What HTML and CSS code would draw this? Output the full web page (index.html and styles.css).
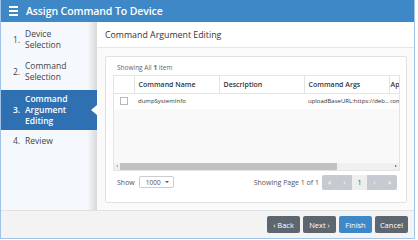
FILE: index.html
```html
<!DOCTYPE html>
<html lang="en">

<head>
  <meta charset="UTF-8">
  <title>Assign Command To Device</title>
  <link rel="stylesheet" href="styles.css">
</head>

<body>

  <div class="window">
    <div class="titlebar">
      <span class="menu-icon"><i></i><i></i><i></i></span>
      <span class="title">Assign Command To Device</span>
    </div>

    <div class="main">
      <!-- wizard steps -->
      <ul class="steps">
        <li><span class="num">1.</span><span class="label">Device<br>Selection</span></li>
        <li><span class="num">2.</span><span class="label">Command<br>Selection</span></li>
        <li class="active"><span class="num">3.</span><span class="label">Command<br>Argument<br>Editing</span></li>
        <li><span class="num">4.</span><span class="label">Review</span></li>
      </ul>

      <div class="content">
        <div class="content-header">Command Argument Editing</div>
        <div class="content-body">
          <div class="panel">
            <div class="count">Showing All <b>1</b> item</div>
            <div class="grid">
              <div class="grid-scroll">
                <table>
                  <colgroup>
                    <col class="col-check">
                    <col class="col-data">
                    <col class="col-data">
                    <col class="col-data">
                    <col>
                  </colgroup>
                  <thead>
                    <tr>
                      <th></th>
                      <th>Command Name</th>
                      <th>Description</th>
                      <th>Command Args</th>
                      <th class="cut">Ap</th>
                    </tr>
                  </thead>
                  <tbody>
                    <tr>
                      <td><span class="checkbox"></span></td>
                      <td>dumpSystemInfo</td>
                      <td></td>
                      <td>uploadBaseURL:https://deb...</td>
                      <td class="cut">com</td>
                    </tr>
                  </tbody>
                </table>
              </div>
              <div class="hscroll">
                <span class="arrow left"></span>
                <span class="thumb"></span>
                <span class="arrow right"></span>
              </div>
            </div>
            <div class="pager">
              <div class="page-size">Show <span class="select">1000 <i class="caret"></i></span></div>
              <div class="page-info">Showing Page 1 of 1</div>
              <div class="page-buttons">
                <span class="pbtn">&laquo;</span>
                <span class="pbtn">&lsaquo;</span>
                <span class="pbtn current">1</span>
                <span class="pbtn">&rsaquo;</span>
                <span class="pbtn">&raquo;</span>
              </div>
            </div>
          </div>
        </div>
      </div>
    </div>

    <div class="footer">
      <button class="btn">&lsaquo; Back</button>
      <button class="btn">Next &rsaquo;</button>
      <button class="btn primary">Finish</button>
      <button class="btn">Cancel</button>
    </div>
  </div>

</body>

</html>
```

FILE: styles.css
```css
* {
  margin: 0;
  padding: 0;
  box-sizing: border-box;
}

body {
  font-family: "Open Sans", "DejaVu Sans", sans-serif;
  background-color: #fff;
  color: #333;
}

.window {
  width: 415px;
  height: 239px;
  border: 1px solid #9fc4e8;
  border-top: none;
  display: flex;
  flex-direction: column;
  background-color: #fff;
  overflow: hidden;
}

.titlebar {
  height: 22px;
  flex-shrink: 0;
  background-color: #3f88c8;
  color: white;
  display: flex;
  align-items: center;
  padding-left: 8px;
}

.menu-icon {
  display: flex;
  flex-direction: column;
  gap: 2px;
  width: 9px;
  margin-right: 8px;
}

.menu-icon i {
  display: block;
  height: 2px;
  background-color: white;
}

.title {
  font-size: 10.5px;
  font-weight: 600;
  letter-spacing: -0.1px;
}

.main {
  flex: 1;
  display: flex;
  min-height: 0;
}

/* wizard steps */
.steps {
  list-style: none;
  width: 96px;
  flex-shrink: 0;
  background: linear-gradient(to right, #f5f8fc 0%, #f5f8fc 90%, #d8d8d8 100%);
  font-size: 8.5px;
  color: #444;
  padding-top: 3px;
}

.steps li {
  display: flex;
  align-items: center;
  padding: 3px 0 3px 12px;
  line-height: 11px;
  position: relative;
}

.steps li + li {
  margin-top: 4px;
}

.steps .num {
  width: 12px;
  flex-shrink: 0;
}

.steps li.active {
  background-color: #2f70b2;
  color: white;
  font-weight: 600;
  padding-top: 3px;
  padding-bottom: 4px;
  margin-top: 5px;
}

.steps li.active + li {
  margin-top: 2px;
}

.steps li.active::after {
  content: "";
  position: absolute;
  right: 0;
  top: 50%;
  margin-top: -5px;
  border-top: 5px solid transparent;
  border-bottom: 5px solid transparent;
  border-right: 6px solid white;
}

.content {
  flex: 1;
  min-width: 0;
  display: flex;
  flex-direction: column;
  background-color: #fff;
}

.content-header {
  height: 26px;
  flex-shrink: 0;
  display: flex;
  align-items: center;
  padding-left: 8px;
  font-size: 8.8px;
  color: #333;
  border-bottom: 1px solid #e6e6e6;
}

.content-body {
  flex: 1;
  min-height: 0;
  background-color: #fafafa;
  padding: 8px 7px 7px 8px;
}

.panel {
  height: 100%;
  background-color: #fff;
  border: 1px solid #e2e2e2;
  border-radius: 2px;
  padding: 6px 6px 0 7px;
  display: flex;
  flex-direction: column;
}

.count {
  font-size: 6.5px;
  color: #666;
  padding-left: 4px;
  height: 12px;
}

.grid {
  border: 1px solid #e4e4e4;
  height: 96px;
  flex-shrink: 0;
  display: flex;
  flex-direction: column;
  background-color: #f9f9f9;
  overflow: hidden;
}

.grid-scroll {
  flex: 1;
  overflow: hidden;
}

table {
  border-collapse: collapse;
  width: 100%;
  table-layout: fixed;
  font-size: 6px;
  color: #333;
}

.col-check {
  width: 20px;
}

.col-data {
  width: 85px;
}

th {
  background-color: #fff;
  font-weight: 600;
  font-size: 7px;
  text-align: left;
  height: 17px;
  padding-left: 4px;
  border-right: 1px solid #e4e4e4;
  border-bottom: 1px solid #e4e4e4;
  white-space: nowrap;
  overflow: hidden;
}

td {
  background-color: #fff;
  height: 16px;
  padding-left: 4px;
  white-space: nowrap;
  overflow: hidden;
}

th.cut,
td.cut {
  padding-left: 1px;
  border-right: none;
}

td.cut {
  font-size: 5.6px;
  letter-spacing: -0.2px;
}

.checkbox {
  display: block;
  width: 8px;
  height: 8px;
  border: 1px solid #b8b8b8;
  background-color: #fff;
  margin-left: 2px;
}

.hscroll {
  height: 7px;
  flex-shrink: 0;
  display: flex;
  align-items: center;
  background-color: #f0f0f0;
}

.hscroll .arrow {
  width: 6px;
  height: 7px;
  position: relative;
}

.hscroll .arrow::after {
  content: "";
  position: absolute;
  top: 2px;
  left: 2px;
  border-top: 1.5px solid transparent;
  border-bottom: 1.5px solid transparent;
}

.hscroll .left::after {
  border-right: 2px solid #a0a0a0;
}

.hscroll .right::after {
  border-left: 2px solid #505050;
}

.hscroll .thumb {
  width: 217px;
  height: 7px;
  background-color: #c1c1c1;
  margin-right: auto;
}

.pager {
  display: flex;
  align-items: center;
  height: 22px;
  font-size: 7px;
  color: #555;
  padding-left: 4px;
}

.page-size {
  display: flex;
  align-items: center;
  gap: 4px;
}

.select {
  display: inline-flex;
  align-items: center;
  gap: 4px;
  height: 12px;
  padding: 0 4px 0 6px;
  border: 1px solid #ccc;
  border-radius: 2px;
  background-color: #fff;
  font-size: 6.5px;
}

.caret {
  border-left: 2px solid transparent;
  border-right: 2px solid transparent;
  border-top: 2.5px solid #555;
}

.page-info {
  margin-left: auto;
  margin-right: 3px;
}

.page-buttons {
  display: flex;
  height: 15px;
  margin-right: 3px;
  border-radius: 2px;
  overflow: hidden;
  background-color: #c5cbd1;
}

.pbtn {
  width: 15px;
  display: flex;
  align-items: center;
  justify-content: center;
  color: #fff;
  font-size: 7.5px;
}

.pbtn.current {
  background-color: #eeeeee;
  color: #444;
  font-size: 6.5px;
}

/* bottom buttons */
.footer {
  height: 28px;
  flex-shrink: 0;
  background-color: #f3f3f3;
  border-top: 1px solid #e2e2e2;
  display: flex;
  justify-content: flex-end;
  align-items: center;
  gap: 3px;
  padding-right: 6px;
}

.btn {
  height: 17px;
  width: 33px;
  border: none;
  border-radius: 2px;
  background-color: #5d666f;
  color: white;
  font-family: "Open Sans", "DejaVu Sans", sans-serif;
  font-size: 7.5px;
}

.btn.primary {
  background-color: #3f88c8;
}
```
